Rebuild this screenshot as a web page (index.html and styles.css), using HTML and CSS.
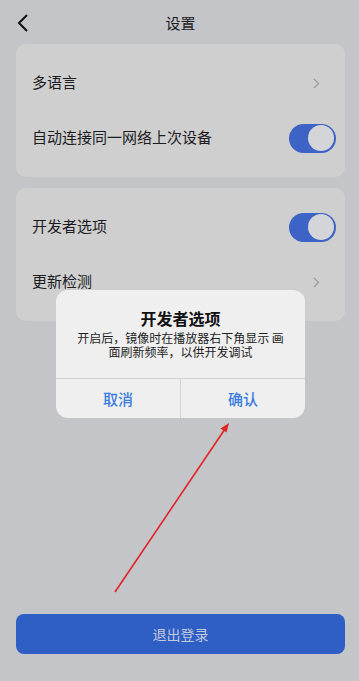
FILE: index.html
```html
<!DOCTYPE html>
<html lang="zh">
<head>
<meta charset="utf-8">
<link rel="stylesheet" href="styles.css">
</head>
<body>
<div class="page">
  <header class="header">
    <svg class="back" width="14" height="20" viewBox="0 0 14 20"><path d="M11 2 L3 10 L11 18" fill="none" stroke="#111" stroke-width="2"/></svg>
    <div class="title">设置</div>
  </header>
  <section class="card">
    <div class="row"><span class="label">多语言</span><svg class="chev" width="7" height="11" viewBox="0 0 7 11"><path d="M1 1 L5.5 5.5 L1 10" fill="none" stroke="#9a9a9c" stroke-width="1.2"/></svg></div>
    <div class="row"><span class="label">自动连接同一网络上次设备</span><div class="toggle"><div class="knob"></div></div></div>
  </section>
  <section class="card">
    <div class="row"><span class="label">开发者选项</span><div class="toggle"><div class="knob"></div></div></div>
    <div class="row"><span class="label">更新检测</span><svg class="chev" width="7" height="11" viewBox="0 0 7 11"><path d="M1 1 L5.5 5.5 L1 10" fill="none" stroke="#9a9a9c" stroke-width="1.2"/></svg></div>
  </section>
  <button class="logout">退出登录</button>
</div>
<div class="dialog">
  <div class="dlg-body">
    <div class="dlg-title">开发者选项</div>
    <div class="dlg-msg">开启后，镜像时在播放器右下角显示 画<br>面刷新频率，以供开发调试</div>
  </div>
  <div class="dlg-actions">
    <div class="dlg-btn">取消</div>
    <div class="dlg-btn">确认</div>
  </div>
</div>
<svg class="arrow" width="359" height="681" viewBox="0 0 359 681">
  <line x1="115" y1="592" x2="225" y2="429" stroke="#e02424" stroke-width="1.6"/>
  <path d="M229 423 L220.5 428.5 L226.5 432.5 Z" fill="#e02424"/>
</svg>
</body>
</html>
```
FILE: styles.css
```css
* { box-sizing: border-box; }
html, body { margin: 0; padding: 0; }
body {
  background: #c4c5c9;
  font-family: "Noto Sans CJK SC", "Noto Sans", sans-serif;
  color: #1c1c1e;
  width: 359px;
  height: 681px;
  overflow: hidden;
  position: relative;
}
.page {
  height: 681px;
  display: flex;
  flex-direction: column;
  padding: 0 14px 27px 16px;
}
.header {
  height: 44px;
  display: flex;
  align-items: center;
  justify-content: center;
  position: relative;
}
.back { position: absolute; left: 0; top: 13px; }
.title { font-size: 15px; line-height: 20px; margin-top: 2px; }
.card {
  background: #cfcfd0;
  border-radius: 10px;
  padding: 11.5px 9px 11.5px 16px;
  margin-bottom: 11px;
}
.row {
  height: 55px;
  display: flex;
  align-items: center;
  justify-content: space-between;
  font-size: 15px;
}
.label { line-height: 20px; padding-bottom: 2px; }
.chev { margin-right: 16px; }
.toggle {
  width: 47px;
  height: 29px;
  border-radius: 15px;
  background: #3d63c6;
  display: flex;
  align-items: center;
  justify-content: flex-end;
  padding-right: 2px;
}
.knob {
  width: 26px;
  height: 26px;
  border-radius: 50%;
  background: #d4d5d8;
}
.logout {
  margin-top: auto;
  height: 40px;
  border: 0;
  border-radius: 8px;
  background: #2f5ec5;
  color: #c2c9da;
  font-family: inherit;
  font-size: 14px;
}
.dialog {
  position: absolute;
  left: 56px;
  top: 290px;
  width: 249px;
  height: 128px;
  background: #efeff0;
  border-radius: 12px;
  display: flex;
  flex-direction: column;
  overflow: hidden;
}
.dlg-body {
  padding: 18px 10px 0;
  height: 89px;
  border-bottom: 1px solid #d3d3d6;
  text-align: center;
}
.dlg-title { font-size: 16px; font-weight: bold; line-height: 20px; color: #111; }
.dlg-msg { margin-top: 3px; font-size: 12px; line-height: 14px; color: #1e1e1e; }
.dlg-actions { flex: 1; display: flex; }
.dlg-btn {
  flex: 1;
  display: flex;
  align-items: center;
  justify-content: center;
  font-size: 15px;
  font-weight: 500;
  color: #3a7ddf;
}
.dlg-btn + .dlg-btn { border-left: 1px solid #d3d3d6; }
.arrow { position: absolute; left: 0; top: 0; pointer-events: none; }
```
